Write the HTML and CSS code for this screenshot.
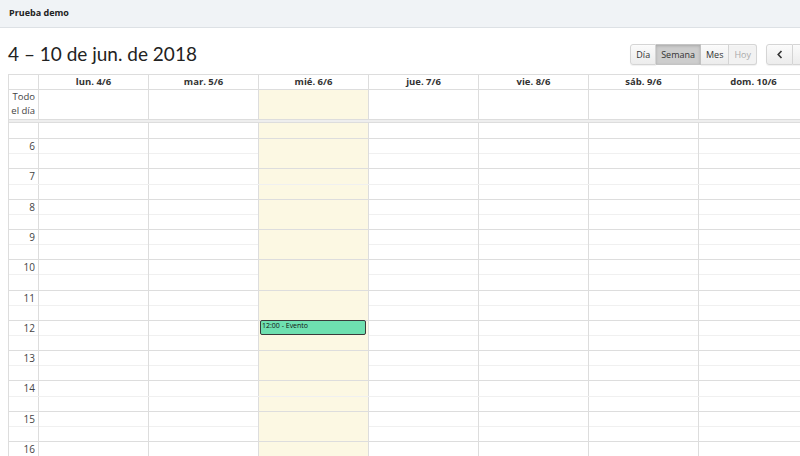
FILE: index.html
```html
<!DOCTYPE html>
<html lang="es">
<head>
<meta charset="utf-8">
<title>Prueba demo</title>
<link rel="stylesheet" href="styles.css">
</head>
<body>
<header class="topbar">Prueba demo</header>
<main class="page">
  <div class="toolbar">
    <h2 class="title">4 – 10 de jun. de 2018</h2>
    <div class="btns">
      <div class="group">
        <button class="btn first">Día</button>
        <button class="btn active">Semana</button>
        <button class="btn">Mes</button>
        <button class="btn last disabled">Hoy</button>
      </div>
      <div class="group">
        <button class="btn first nav"><svg width="8" height="9" viewBox="0 0 8 9"><path d="M5.5 1 L2.2 4.5 L5.5 8" fill="none" stroke="#333" stroke-width="1.6"/></svg></button>
        <button class="btn last nav"><svg width="8" height="9" viewBox="0 0 8 9"><path d="M2.5 1 L5.8 4.5 L2.5 8" fill="none" stroke="#333" stroke-width="1.6"/></svg></button>
      </div>
    </div>
  </div>
  <div class="cal">
    <div class="row head">
      <div class="ax"></div>
      <div class="c">lun. 4/6</div><div class="c">mar. 5/6</div><div class="c">mié. 6/6</div><div class="c">jue. 7/6</div><div class="c">vie. 8/6</div><div class="c">sáb. 9/6</div><div class="c">dom. 10/6</div>
    </div>
    <div class="row allday">
      <div class="ax">Todo<br>el día</div>
      <div class="c"></div><div class="c"></div><div class="c t"></div><div class="c"></div><div class="c"></div><div class="c"></div><div class="c"></div>
    </div>
    <div class="divider"></div>
    <div class="slats">
      <div class="row s first"><div class="ax"></div><div class="c"></div><div class="c"></div><div class="c t"></div><div class="c"></div><div class="c"></div><div class="c"></div><div class="c"></div></div>
      <div class="row s hr"><div class="ax">6</div><div class="c"></div><div class="c"></div><div class="c t"></div><div class="c"></div><div class="c"></div><div class="c"></div><div class="c"></div></div>
      <div class="row s"><div class="ax"></div><div class="c"></div><div class="c"></div><div class="c t"></div><div class="c"></div><div class="c"></div><div class="c"></div><div class="c"></div></div>
      <div class="row s hr"><div class="ax">7</div><div class="c"></div><div class="c"></div><div class="c t"></div><div class="c"></div><div class="c"></div><div class="c"></div><div class="c"></div></div>
      <div class="row s"><div class="ax"></div><div class="c"></div><div class="c"></div><div class="c t"></div><div class="c"></div><div class="c"></div><div class="c"></div><div class="c"></div></div>
      <div class="row s hr"><div class="ax">8</div><div class="c"></div><div class="c"></div><div class="c t"></div><div class="c"></div><div class="c"></div><div class="c"></div><div class="c"></div></div>
      <div class="row s"><div class="ax"></div><div class="c"></div><div class="c"></div><div class="c t"></div><div class="c"></div><div class="c"></div><div class="c"></div><div class="c"></div></div>
      <div class="row s hr"><div class="ax">9</div><div class="c"></div><div class="c"></div><div class="c t"></div><div class="c"></div><div class="c"></div><div class="c"></div><div class="c"></div></div>
      <div class="row s"><div class="ax"></div><div class="c"></div><div class="c"></div><div class="c t"></div><div class="c"></div><div class="c"></div><div class="c"></div><div class="c"></div></div>
      <div class="row s hr"><div class="ax">10</div><div class="c"></div><div class="c"></div><div class="c t"></div><div class="c"></div><div class="c"></div><div class="c"></div><div class="c"></div></div>
      <div class="row s"><div class="ax"></div><div class="c"></div><div class="c"></div><div class="c t"></div><div class="c"></div><div class="c"></div><div class="c"></div><div class="c"></div></div>
      <div class="row s hr"><div class="ax">11</div><div class="c"></div><div class="c"></div><div class="c t"></div><div class="c"></div><div class="c"></div><div class="c"></div><div class="c"></div></div>
      <div class="row s"><div class="ax"></div><div class="c"></div><div class="c"></div><div class="c t"></div><div class="c"></div><div class="c"></div><div class="c"></div><div class="c"></div></div>
      <div class="row s hr"><div class="ax">12</div><div class="c"></div><div class="c"></div><div class="c t"><div class="event">12:00 - Evento</div></div><div class="c"></div><div class="c"></div><div class="c"></div><div class="c"></div></div>
      <div class="row s"><div class="ax"></div><div class="c"></div><div class="c"></div><div class="c t"></div><div class="c"></div><div class="c"></div><div class="c"></div><div class="c"></div></div>
      <div class="row s hr"><div class="ax">13</div><div class="c"></div><div class="c"></div><div class="c t"></div><div class="c"></div><div class="c"></div><div class="c"></div><div class="c"></div></div>
      <div class="row s"><div class="ax"></div><div class="c"></div><div class="c"></div><div class="c t"></div><div class="c"></div><div class="c"></div><div class="c"></div><div class="c"></div></div>
      <div class="row s hr"><div class="ax">14</div><div class="c"></div><div class="c"></div><div class="c t"></div><div class="c"></div><div class="c"></div><div class="c"></div><div class="c"></div></div>
      <div class="row s"><div class="ax"></div><div class="c"></div><div class="c"></div><div class="c t"></div><div class="c"></div><div class="c"></div><div class="c"></div><div class="c"></div></div>
      <div class="row s hr"><div class="ax">15</div><div class="c"></div><div class="c"></div><div class="c t"></div><div class="c"></div><div class="c"></div><div class="c"></div><div class="c"></div></div>
      <div class="row s"><div class="ax"></div><div class="c"></div><div class="c"></div><div class="c t"></div><div class="c"></div><div class="c"></div><div class="c"></div><div class="c"></div></div>
      <div class="row s hr"><div class="ax">16</div><div class="c"></div><div class="c"></div><div class="c t"></div><div class="c"></div><div class="c"></div><div class="c"></div><div class="c"></div></div>
      <div class="row s"><div class="ax"></div><div class="c"></div><div class="c"></div><div class="c t"></div><div class="c"></div><div class="c"></div><div class="c"></div><div class="c"></div></div>
    </div>
  </div>
</main>
</body>
</html>
```
FILE: styles.css
```css
* { box-sizing: border-box; }
html, body { margin: 0; padding: 0; }
body {
  font-family: "Open Sans", "Liberation Sans", sans-serif;
  color: #333;
  background: #fff;
  width: 800px;
  height: 456px;
  overflow: hidden;
}
.topbar {
  height: 28px;
  background: #f0f3f6;
  border-bottom: 1px solid #dde1e5;
  font-size: 9px;
  font-weight: 700;
  color: #222;
  padding-left: 9px;
  line-height: 26px;
}
.page {
  padding: 0 0 0 8px;
  width: 830px;
}
.toolbar {
  display: flex;
  align-items: center;
  justify-content: space-between;
  height: 26px;
  margin-top: 13px;
  margin-bottom: 7px;
}
.title {
  margin: 0;
  font-family: Lato, "Open Sans", sans-serif;
  font-size: 19px;
  font-weight: 400;
  color: #222;
  line-height: 26px;
}
.btns {
  display: flex;
  gap: 9px;
  margin-right: 10px;
}
.group { display: flex; }
.btn {
  font-family: "Open Sans", "Liberation Sans", sans-serif;
  font-size: 9px;
  color: #333;
  height: 21px;
  padding: 0 5px;
  margin: 0;
  border: 1px solid #d5d5d5;
  border-left-width: 0;
  background: linear-gradient(#fbfbfb, #ececec);
  box-shadow: inset 0 1px 0 rgba(255,255,255,.3), 0 1px 1px rgba(0,0,0,.06);
}
.btn.first { border-left-width: 1px; border-radius: 3px 0 0 3px; }
.btn.last { border-radius: 0 3px 3px 0; }
.btn.active {
  background: #cdcdcd;
  box-shadow: inset 0 1px 3px rgba(0,0,0,.18);
  border-color: #c4c4c4;
}
.btn.disabled { color: #aaa; background: #f2f2f2; }
.btn.nav {
  width: 27px;
  padding: 0;
  display: flex;
  align-items: center;
  justify-content: center;
}
.cal {
  width: 801px;
  border-top: 1px solid #ddd;
  border-left: 1px solid #ddd;
}
.row {
  display: grid;
  grid-template-columns: 30px repeat(7, 110px);
}
.row > div { border-right: 1px solid #ddd; }
.head {
  height: 15px;
  border-bottom: 1px solid #ddd;
}
.head .c {
  font-size: 9.5px;
  font-weight: 700;
  text-align: center;
  line-height: 14px;
  color: #333;
}
.allday {
  height: 29px;
}
.allday .ax {
  font-size: 9.5px;
  text-align: right;
  padding-right: 3px;
  line-height: 14px;
  color: #444;
}
.t { background: #fcf8e3; }
.divider {
  height: 4px;
  background: #eee;
  border-top: 1px solid #ddd;
  border-bottom: 1px solid #ddd;
}
.s {
  height: 15.15px;
  border-top: 1px solid #f0f0f0;
}
.s.hr { border-top-color: #ddd; }
.s.first { border-top: 0; }
.s .ax {
  font-size: 10px;
  text-align: right;
  padding-right: 3px;
  line-height: 15px;
  color: #444;
}
.s .c { position: relative; }
.event {
  position: absolute;
  left: 1px;
  right: 2px;
  top: -1px;
  height: 15px;
  background: #6ee0b0;
  border: 1px solid #3b3b3b;
  border-radius: 2px;
  font-size: 7px;
  line-height: 10px;
  padding-left: 1px;
  color: #111;
  z-index: 2;
}
```
